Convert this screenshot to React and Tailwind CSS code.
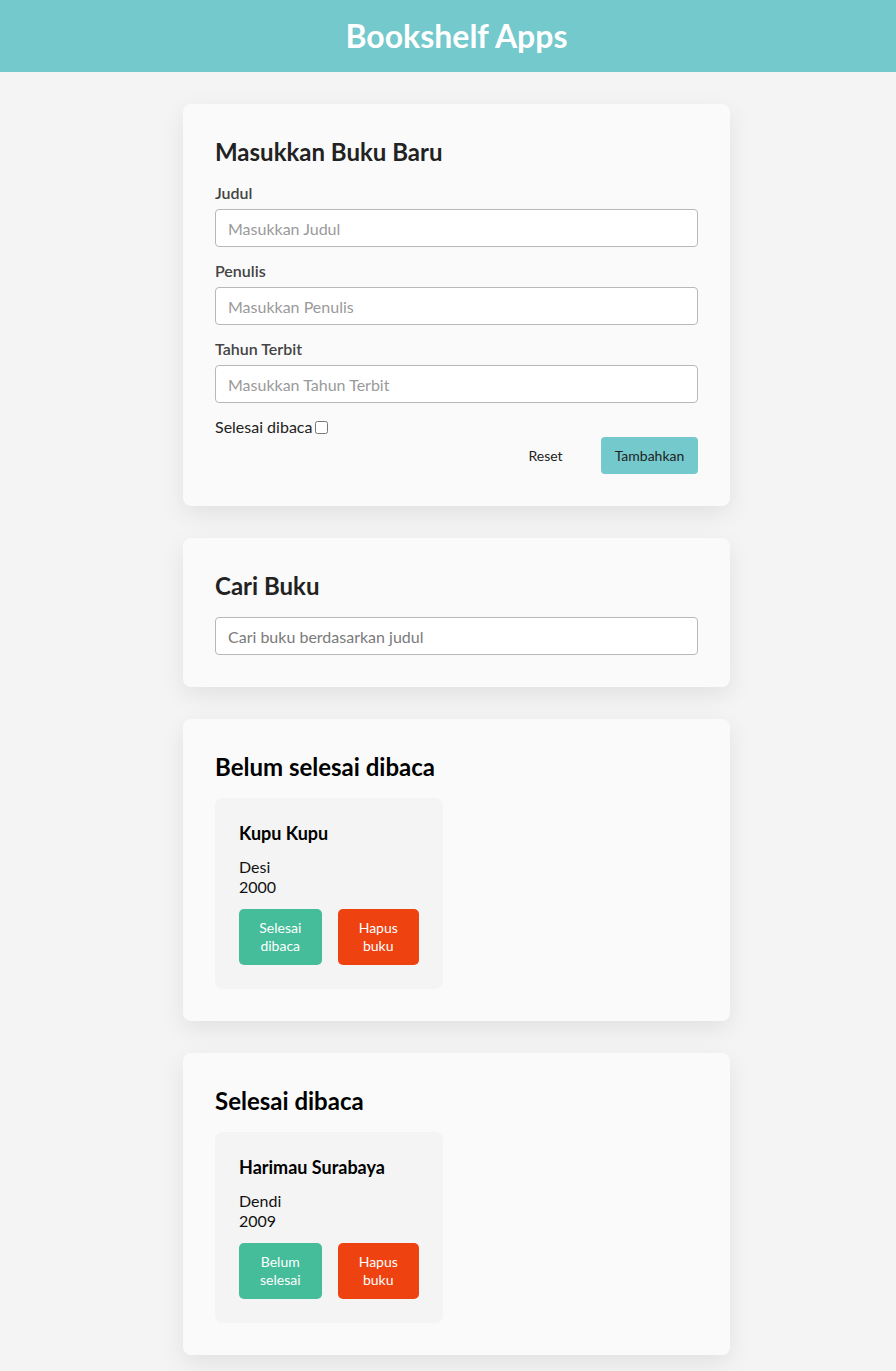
import React from "react";

const font = { fontFamily: "Lato, 'Noto Sans', sans-serif" };

function Field({ label, placeholder }) {
  return (
    <div className="flex flex-col">
      <label className="text-[16px] leading-[20px] font-semibold text-[#444]">{label}</label>
      <input
        placeholder={placeholder}
        className="mt-1.5 h-[38px] w-full rounded-[4px] border border-[#b8b8b8] bg-white px-3 text-[16px] text-[#333] placeholder:text-[#9a9a9a] outline-none"
      />
    </div>
  );
}

function BookCard({ title, author, year, action }) {
  return (
    <div className="w-[228px] rounded-lg bg-[#f4f4f4] p-6">
      <h3 className="text-[18px] leading-[22px] font-bold text-black">{title}</h3>
      <p className="mt-[13px] text-[16px] leading-[20px] text-[#111]">{author}</p>
      <p className="text-[16px] leading-[20px] text-[#111]">{year}</p>
      <div className="mt-3 flex gap-4">
        <button className="h-[56px] w-[83px] rounded-[5px] bg-[#45bc9a] text-[14px] leading-[18px] text-white">
          {action[0]}
          <br />
          {action[1]}
        </button>
        <button className="h-[56px] w-[82px] rounded-[5px] bg-[#ee4210] text-[14px] leading-[18px] text-white">
          Hapus
          <br />
          buku
        </button>
      </div>
    </div>
  );
}

function Card({ children }) {
  return (
    <section className="w-[547px] rounded-lg bg-[#fafafa] p-8 shadow-[0_8px_24px_rgba(0,0,0,0.08)]">
      {children}
    </section>
  );
}

export default function App() {
  return (
    <div style={font} className="min-h-[1371px] bg-[#f4f4f4] pb-4">
      <header className="flex h-[72px] items-center justify-center bg-[#73c9cc] pl-[17px]">
        <h1 className="text-[32px] leading-none font-bold text-white">Bookshelf Apps</h1>
      </header>
      <main className="mt-8 flex flex-col items-center gap-8 pl-[17px]">
        <Card>
          <h2 className="text-[24px] leading-[31px] font-bold text-[#222]">Masukkan Buku Baru</h2>
          <div className="mt-4 flex flex-col gap-3.5">
            <Field label="Judul" placeholder="Masukkan Judul" />
            <Field label="Penulis" placeholder="Masukkan Penulis" />
            <Field label="Tahun Terbit" placeholder="Masukkan Tahun Terbit" />
            <div className="flex items-center text-[16px] leading-[20px] text-[#222]">
              <span>Selesai dibaca</span>
              <input type="checkbox" className="ml-[3px] h-[13px] w-[13px]" />
            </div>
          </div>
          <div className="flex justify-end gap-[7px]">
            <button className="h-[37px] w-[97px] rounded-[4px] text-[14px] text-[#222]">Reset</button>
            <button className="h-[37px] w-[97px] rounded-[4px] bg-[#73c9cc] text-[14px] text-[#222]">Tambahkan</button>
          </div>
        </Card>
        <Card>
          <h2 className="text-[24px] leading-[31px] font-bold text-[#222]">Cari Buku</h2>
          <input
            placeholder="Cari buku berdasarkan judul"
            className="mt-4 h-[38px] w-full rounded-[4px] border border-[#b8b8b8] bg-white px-3 text-[16px] placeholder:text-[#7a7a7a] outline-none"
          />
        </Card>
        <Card>
          <h2 className="text-[24px] leading-[31px] font-bold text-black">Belum selesai dibaca</h2>
          <div className="mt-4">
            <BookCard title="Kupu Kupu" author="Desi" year="2000" action={["Selesai", "dibaca"]} />
          </div>
        </Card>
        <Card>
          <h2 className="text-[24px] leading-[31px] font-bold text-black">Selesai dibaca</h2>
          <div className="mt-4">
            <BookCard title="Harimau Surabaya" author="Dendi" year="2009" action={["Belum", "selesai"]} />
          </div>
        </Card>
      </main>
    </div>
  );
}
